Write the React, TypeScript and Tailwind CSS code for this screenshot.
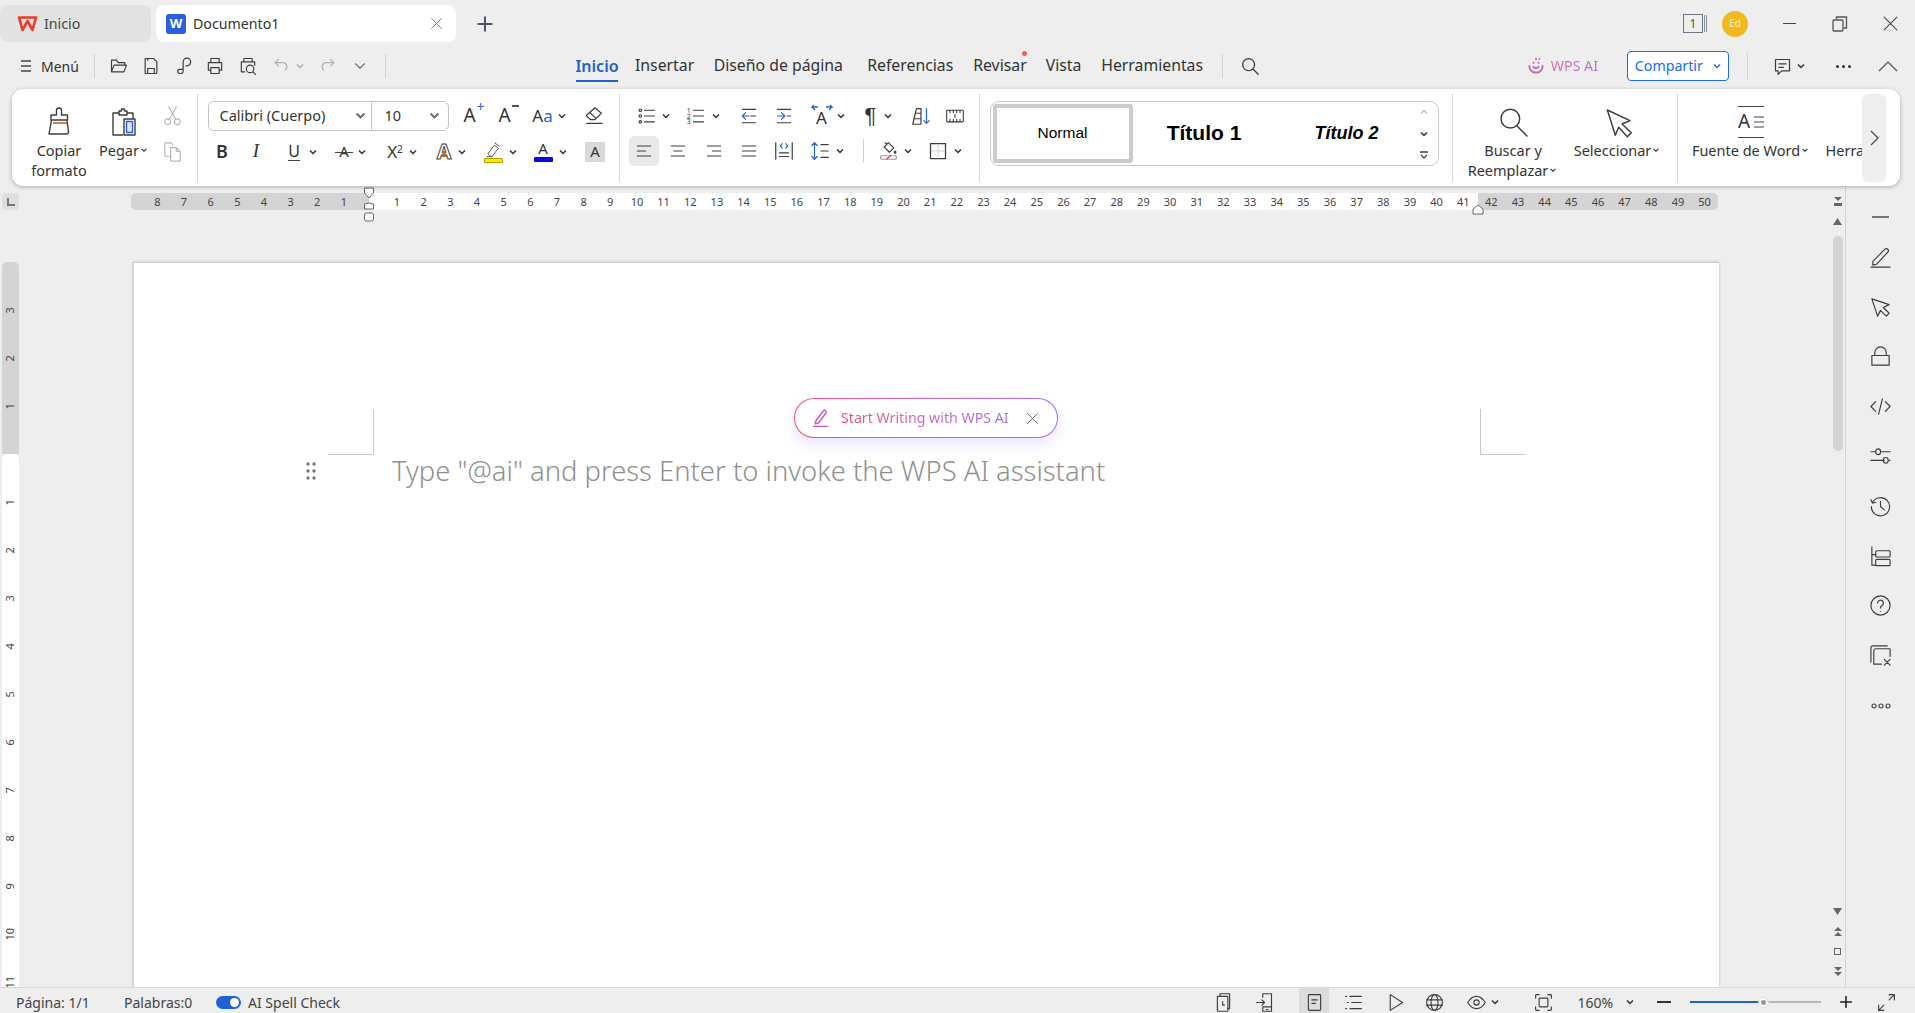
import type { ReactNode } from "react";

const ui = "font-['Noto_Sans',sans-serif]";

function S({
  size = 20,
  box = 24,
  color = "#3d3d3d",
  sw = 1.4,
  children,
}: {
  size?: number;
  box?: number;
  color?: string;
  sw?: number;
  children: ReactNode;
}) {
  return (
    <svg
      width={size}
      height={size}
      viewBox={`0 0 ${box} ${box}`}
      fill="none"
      stroke={color}
      strokeWidth={sw}
      strokeLinecap="round"
      strokeLinejoin="round"
    >
      {children}
    </svg>
  );
}

function Chev({ className = "", size = 10, color = "#333" }: { className?: string; size?: number; color?: string }) {
  return (
    <span className={`flex w-[10px] shrink-0 items-center justify-center ${className}`}>
      <svg width={size} height={size} viewBox="0 0 10 10" fill="none" stroke={color} strokeWidth="1.5">
        <path d="M2 3.5 5 6.5 8 3.5" />
      </svg>
    </span>
  );
}

function Ic({ className = "", children }: { className?: string; children: ReactNode }) {
  return <div className={`flex h-6 w-6 shrink-0 items-center justify-center ${className}`}>{children}</div>;
}

function Divider({ className = "" }: { className?: string }) {
  return <div className={`w-px shrink-0 bg-[#d2d2d2] ${className}`} />;
}

function TitleBar() {
  return (
    <div className="flex h-[47px] items-start pt-[5px]">
      <div className="flex h-[37px] w-[151px] items-center rounded-lg bg-[#e2e2e2] pl-[17px] text-[14.2px] text-[#444]">
        <svg width="21" height="18" viewBox="0 0 21 18" fill="none" stroke="#ee3a2c" strokeWidth="2.6" strokeLinejoin="round">
          <path d="M2 2.5h17L15.5 15 10.5 6 5.5 15z" />
        </svg>
        <span className="ml-[6px]">Inicio</span>
      </div>
      <div className="ml-[5px] flex h-[37px] w-[300px] items-center rounded-lg bg-white pl-[10px] text-[14.2px] text-[#333]">
        <div className="flex h-[20px] w-[20px] items-center justify-center rounded-[3px] bg-[#2a5fe0] text-[13px] font-bold text-white">W</div>
        <span className="ml-[7px]">Documento1</span>
        <div className="ml-auto mr-[11px]">
          <S size={17} color="#777" sw={1.3}>
            <path d="M5 5l14 14M19 5 5 19" />
          </S>
        </div>
      </div>
      <div className="ml-[19px] flex h-[37px] items-center">
        <S size={20} color="#4a5568" sw={2.4}>
          <path d="M12 4v16M4 12h16" />
        </S>
      </div>
      <div className="ml-auto flex h-[37px] items-center">
        <div className="flex items-center">
          <div className="flex h-[19px] w-[20px] items-center justify-center border-[1.5px] border-[#6b7685] text-[12px] leading-none text-[#555]">1</div>
          <div className="ml-[1px] h-[17px] w-[3px] border-x border-[#8a8f96]" />
        </div>
        <div className="ml-[15px] flex h-[26px] w-[26px] items-center justify-center rounded-full bg-[#f2b81f] text-[10px] text-[#fdf3d0]">Ed</div>
        <div className="ml-[35px] h-[1.5px] w-[13px] bg-[#444]" />
        <div className="ml-[36px]">
          <svg width="16" height="16" viewBox="0 0 16 16" fill="none" stroke="#555" strokeWidth="1.3">
            <rect x="1" y="4" width="10" height="11" rx="1" />
            <path d="M4.5 3V1h10v11h-3" />
          </svg>
        </div>
        <div className="ml-[34px] mr-[16px]">
          <S size={17} color="#444" sw={1.5}>
            <path d="M3 3l18 18M21 3 3 21" />
          </S>
        </div>
      </div>
    </div>
  );
}

function MenuRow() {
  return (
    <div className="flex h-[42px] items-center pb-[4px] text-[15.8px] text-[#333]">
      <div className="ml-[20px]">
        <svg width="12" height="14" viewBox="0 0 12 14" stroke="#444" strokeWidth="1.3">
          <path d="M1 2h10M1 7h10M1 12h10" />
        </svg>
      </div>
      <span className="ml-[9px] w-[40px] text-[14px]">Menú</span>
      <Divider className="ml-[13px] h-[24px]" />
      <Ic className="ml-[12px]">
        <S>
          <path d="M3 19V5h6l2 3h8v3M3 19l3-8h15l-3 8z" />
        </S>
      </Ic>
      <Ic className="ml-[8px]">
        <S>
          <path d="M5 3h10l4 4v13a1 1 0 0 1-1 1H6a1 1 0 0 1-1-1zM8 21v-6h8v6M8 3v2" />
        </S>
      </Ic>
      <Ic className="ml-[9px]">
        <S>
          <path d="M11 15V7a4.5 4.5 0 0 1 9 0c0 3-2.5 5-6 5M11 15v3a3 3 0 0 1-3 3H7a2.5 2.5 0 0 1 0-5h4" />
        </S>
      </Ic>
      <Ic className="ml-[7px]">
        <S>
          <path d="M7 8V3h10v5M7 17H4V8h16v9h-3M7 14h10v7H7z" />
        </S>
      </Ic>
      <Ic className="ml-[9px]">
        <S>
          <path d="M7 7V3h10v4M8 19H4V7h16v4" />
          <circle cx="14.5" cy="15.5" r="4.5" />
          <path d="M18 19l3 3" />
        </S>
      </Ic>
      <Ic className="ml-[9px]">
        <S color="#b0b0b0">
          <path d="M9 4 5 8l4 4M5 8h9a5 5 0 0 1 3 9" />
        </S>
      </Ic>
      <Chev className="ml-[2px]" color="#b0b0b0" />
      <Ic className="ml-[11px]">
        <S color="#b0b0b0">
          <path d="M15 4l4 4-4 4M19 8h-9a5 5 0 0 0-3 9" />
        </S>
      </Ic>
      <Ic className="ml-[8px]">
        <S size={18}>
          <path d="M6 9l6 6 6-6" />
        </S>
      </Ic>
      <Divider className="ml-[13px] h-[24px]" />
      <div className="relative ml-[190px] flex h-[38px] w-[42px] items-center justify-center">
        <span className="text-[16px] font-semibold text-[#1f62c9]">Inicio</span>
        <div className="absolute bottom-[3px] left-0 h-[2px] w-full bg-[#1f62c9]" />
      </div>
      <span className="ml-[17px] w-[58px] whitespace-nowrap">Insertar</span>
      <span className="ml-[20.7px] w-[132px] whitespace-nowrap">Diseño de página</span>
      <span className="ml-[21.5px] w-[86px] whitespace-nowrap">Referencias</span>
      <span className="relative ml-[20px] w-[53px] whitespace-nowrap">
        Revisar
        <span className="absolute right-[-1px] top-[-3px] h-[5px] w-[5px] rounded-full bg-[#ec5f5f]" />
      </span>
      <span className="ml-[19.5px] w-[36px] whitespace-nowrap">Vista</span>
      <span className="ml-[19.5px] w-[102px] whitespace-nowrap">Herramientas</span>
      <Divider className="ml-[18.7px] h-[24px]" />
      <Ic className="ml-[15px]">
        <S size={22}>
          <circle cx="10.5" cy="10.5" r="6.5" />
          <path d="M15.5 15.5 21 21" />
        </S>
      </Ic>
      <Ic className="ml-[262.6px]">
        <svg width="20" height="20" viewBox="0 0 24 24" fill="none" strokeWidth="2.4" strokeLinecap="round">
          <path d="M4 12a8 8 0 0 0 16 0" stroke="#d86aa8" />
          <path d="M9 13c1.5 2 4.5 2 6 0" stroke="#a76be8" />
          <circle cx="9" cy="8" r="1.2" fill="#e2506f" stroke="none" />
          <circle cx="15" cy="8" r="1.2" fill="#b062d8" stroke="none" />
          <circle cx="12" cy="3.5" r="1.2" fill="#e2506f" stroke="none" />
          <circle cx="16" cy="3.5" r="1" fill="#b062d8" stroke="none" />
        </svg>
      </Ic>
      <span className="ml-[2.4px] w-[47px] whitespace-nowrap bg-gradient-to-r from-[#e46aa6] to-[#a96fe6] bg-clip-text text-[14.2px] text-transparent">WPS AI</span>
      <div className="ml-[29px] flex h-[30px] w-[102px] shrink-0 items-center rounded-[4px] border border-[#1a6cf0] bg-white pl-[7px] text-[14.2px] text-[#1a6cf0]">
        <span className="w-[67px]">Compartir</span>
        <Chev className="ml-[10px]" color="#1a6cf0" />
      </div>
      <Divider className="ml-[18px] h-[26px]" />
      <Ic className="ml-[23px]">
        <S size={21}>
          <path d="M4 4h16v13H11l-4 4v-4H4zM8 9h8M8 13h5" />
        </S>
      </Ic>
      <Chev className="ml-[1.5px]" />
      <div className="ml-[29.5px] flex gap-[3px]">
        <span className="h-[3px] w-[3px] rounded-full bg-[#333]" />
        <span className="h-[3px] w-[3px] rounded-full bg-[#333]" />
        <span className="h-[3px] w-[3px] rounded-full bg-[#333]" />
      </div>
      <div className="ml-[27.5px]">
        <svg width="20" height="12" viewBox="0 0 20 12" fill="none" stroke="#555" strokeWidth="1.2">
          <path d="M1 11 10 2l9 9" />
        </svg>
      </div>
    </div>
  );
}

function AlignLines({ v }: { v: "l" | "c" | "r" | "j" }) {
  const d = {
    l: "M4 6h16M4 12h10M4 18h16",
    c: "M4 6h16M7 12h10M4 18h16",
    r: "M4 6h16M10 12h10M4 18h16",
    j: "M4 6h16M4 12h16M4 18h16",
  }[v];
  return (
    <S size={20} sw={1.3}>
      <path d={d} />
    </S>
  );
}

function BigLabel({ children }: { children: ReactNode }) {
  return <div className="mt-[2px] whitespace-nowrap text-center text-[14.5px] leading-[20px] text-[#333]">{children}</div>;
}

function ClipboardGroup() {
  return (
    <div className="flex h-full w-[186px] shrink-0 border-r border-[#d8d8d8] pt-[12px]">
      <div className="ml-[10px] flex w-[74px] flex-col items-center">
        <svg width="32" height="32" viewBox="0 0 32 32" fill="none" stroke="#3d3d3d" strokeWidth="1.4" strokeLinejoin="round">
          <path d="M13.5 9V4.5a2.5 2.5 0 0 1 5 0V9h6v5H8V9z" />
          <path d="M8.5 14 6 28h17c1.5 0 2.5-1 2.5-2l-1.5-12" />
          <path d="M10 17h14" stroke="#c9602c" strokeWidth="1.6" />
        </svg>
        <BigLabel>
          Copiar
          <br />
          formato
        </BigLabel>
      </div>
      <div className="ml-[4px] flex w-[48px] flex-col items-center">
        <svg width="32" height="32" viewBox="0 0 32 32" fill="none" stroke="#3d3d3d" strokeWidth="1.4" strokeLinejoin="round">
          <path d="M11 7H5v22h10M19 7h6v6" />
          <path d="M11 9V5h2.5V3h3v2H19v4z" />
          <rect x="16" y="13" width="11" height="16" />
          <rect x="18.5" y="15.5" width="6" height="11" stroke="#2a62d8" fill="#dbe6fb" />
        </svg>
        <BigLabel>
          <span className="flex items-center">
            Pegar
            <Chev size={8} className="w-[8px]" />
          </span>
        </BigLabel>
      </div>
      <div className="ml-[12px] flex flex-col">
        <Ic className="mt-[-2px]">
          <S size={23} color="#b8b8b8" sw={1.2}>
            <circle cx="7" cy="18.5" r="3" />
            <circle cx="17" cy="18.5" r="3" />
            <path d="M8.5 16 16 3M15.5 16 8 3" />
          </S>
        </Ic>
        <Ic className="mt-[12px]">
          <S size={23} color="#b8b8b8" sw={1.2}>
            <path d="M9 17H4V3h7l2 3M10 8h6l4 4v10H10zM16 8v4h4" />
          </S>
        </Ic>
      </div>
    </div>
  );
}

function FontGroup() {
  return (
    <div className="h-full w-[421.5px] shrink-0 border-r border-[#d8d8d8] pt-[7px] text-[#333]">
      <div className="flex h-[30px] items-center pl-[9.5px]">
        <div className="flex h-[30px] w-[241px] shrink-0 items-center rounded-[6px] border border-[#c4c4c4] text-[14.5px]">
          <span className="ml-[11px] w-[133px] whitespace-nowrap">Calibri (Cuerpo)</span>
          <Chev size={13} className="ml-[1px] w-[13px]" color="#666" />
          <div className="ml-[4px] h-full w-px bg-[#c4c4c4]" />
          <span className="ml-[13px] w-[43px]">10</span>
          <Chev size={13} className="w-[13px]" color="#666" />
        </div>
        <Ic className="ml-[9px] text-[19px]">
          <span className="relative">
            A<span className="absolute right-[-9px] top-[-3px] text-[14px] leading-[18px] text-[#2a62d8]">+</span>
          </span>
        </Ic>
        <Ic className="ml-[11px] text-[19px]">
          <span className="relative">
            A<span className="absolute right-[-8px] top-[4px] h-[1.5px] w-[7px] bg-[#555]" />
          </span>
        </Ic>
        <Ic className="ml-[14px] text-[17px]">
          <span>
            A<span className="text-[#2a62d8]">a</span>
          </span>
        </Ic>
        <Chev className="ml-[2px]" />
        <Ic className="ml-[15px]">
          <S size={22} sw={1.3}>
            <path d="M13 3 3.5 11.5 8 16h5l7-7zM7.5 8l6 6M4 20h17" />
          </S>
        </Ic>
      </div>
      <div className="mt-[6px] flex h-[30px] items-center pl-[12px]">
        <Ic className="text-[18px] font-semibold">B</Ic>
        <Ic className="ml-[10px] font-['Liberation_Serif',serif] text-[19px] italic">I</Ic>
        <Ic className="ml-[14px] text-[16px]">
          <span className="border-b-[1.5px] border-[#444] leading-[17px]">U</span>
        </Ic>
        <Chev className="ml-[2px]" />
        <Ic className="relative ml-[14px] text-[15px]">
          A<span className="absolute left-[3px] right-[3px] top-[12px] h-px bg-[#444]" />
        </Ic>
        <Chev className="ml-[1px]" />
        <Ic className="ml-[16px] text-[17px]">
          <span>
            X<sup className="text-[10px]">2</sup>
          </span>
        </Ic>
        <Chev className="ml-[1px]" />
        <Ic className="relative ml-[14px] text-[21px] font-bold text-white [-webkit-text-stroke:1px_#444]">
          A
          <svg className="absolute left-[9px] top-[10px]" width="6" height="7" viewBox="0 0 6 7" fill="#c9602c">
            <path d="M3 0l3 7H0z" />
          </svg>
        </Ic>
        <Chev className="ml-[1px]" />
        <Ic className="ml-[14px]">
          <div className="flex flex-col items-center">
            <S size={17} sw={1.2}>
              <path d="M6 20 4 18l9-12 6 4-9 12zM14 3l6 4M3 22h6" />
            </S>
            <div className="h-[5px] w-[19px] rounded-[1px] border border-[#b5a200] bg-[#f6e600]" />
          </div>
        </Ic>
        <Chev className="ml-[3px]" />
        <Ic className="ml-[13px]">
          <div className="flex flex-col items-center text-[15px] leading-[15px]">
            A<div className="mt-[1px] h-[5px] w-[19px] rounded-[1px] bg-[#0a0ad6]" />
          </div>
        </Ic>
        <Chev className="ml-[3px]" />
        <Ic className="ml-[15px]">
          <div className="flex h-[20px] w-[20px] items-center justify-center bg-[#d9d9d9] text-[15px]">A</div>
        </Ic>
      </div>
    </div>
  );
}

function ParagraphGroup() {
  return (
    <div className="h-full w-[360.5px] shrink-0 border-r border-[#d8d8d8] pt-[10px] text-[#333]">
      <div className="flex h-6 items-center pl-[15px]">
        <Ic>
          <S size={20} sw={1.3}>
            <circle cx="4" cy="5" r="1.5" />
            <circle cx="4" cy="12" r="1.5" />
            <circle cx="4" cy="19" r="1.5" />
            <path d="M9 5h12M9 12h12M9 19h12" />
          </S>
        </Ic>
        <Chev className="ml-[2px]" />
        <Ic className="ml-[13.5px]">
          <S size={20} sw={1.3}>
            <path d="M9 5h12M9 12h12M9 19h12" />
            <text x="1" y="8" fontSize="8" stroke="none" fill="#333">1</text>
            <text x="1" y="15" fontSize="8" stroke="none" fill="#333">2</text>
            <text x="1" y="22" fontSize="8" stroke="none" fill="#333">3</text>
          </S>
        </Ic>
        <Chev className="ml-[2.5px]" />
        <Ic className="ml-[16.5px]">
          <S size={20} sw={1.3}>
            <path d="M4 4h16M4 20h16M14 12h6" />
            <path d="M12 12H4M8 8l-4 4 4 4" stroke="#2a62d8" />
          </S>
        </Ic>
        <Ic className="ml-[10.5px]">
          <S size={20} sw={1.3}>
            <path d="M4 4h16M4 20h16M16 12h4" />
            <path d="M4 12h9M9 8l4 4-4 4" stroke="#2a62d8" />
          </S>
        </Ic>
        <Ic className="relative ml-[14px] text-[17px]">
          <span className="mt-[5px]">A</span>
          <svg className="absolute left-0 top-0" width="24" height="10" viewBox="0 0 24 10" fill="none" stroke="#2a62d8" strokeWidth="1.3">
            <path d="M8 3H2l2-2M2 3l3 3M16 3h6l-2-2M22 3l-3 3" />
          </svg>
        </Ic>
        <Chev className="ml-[2px]" />
        <Ic className="ml-[13px] font-['Liberation_Sans',sans-serif] text-[22px]">¶</Ic>
        <Chev />
        <Ic className="ml-[16px]">
          <S size={22} sw={1.3}>
            <path d="M3 21 7 4h5v17zM4.5 15H12M6 9h6" />
            <path d="M18 4v16M15 17l3 3 3-3" stroke="#2a62d8" />
          </S>
        </Ic>
        <Ic className="ml-[10px]">
          <S size={20} sw={1.3}>
            <rect x="2" y="5" width="20" height="14" rx="1" />
            <path d="M6 5v3M10 5v3M14 5v3M18 5v3M6 19v-3M10 19v-3M14 19v-3M18 19v-3M12 10v4" />
          </S>
        </Ic>
      </div>
      <div className="mt-[8px] flex h-[30px] items-center pl-[9.5px]">
        <div className="flex h-[30px] w-[30px] items-center justify-center rounded-[5px] bg-[#e9e9e9]">
          <AlignLines v="l" />
        </div>
        <Ic className="ml-[7px]">
          <AlignLines v="c" />
        </Ic>
        <Ic className="ml-[11.5px]">
          <AlignLines v="r" />
        </Ic>
        <Ic className="ml-[11px]">
          <AlignLines v="j" />
        </Ic>
        <Ic className="ml-[11.5px]">
          <S size={22} sw={1.3}>
            <path d="M3 3v18M21 3v18M7 14h10M7 18h10" />
            <path d="M10 4 8 6.5 10 9M14 4l2 2.5L14 9" stroke="#2a62d8" />
          </S>
        </Ic>
        <Ic className="ml-[12px]">
          <S size={22} sw={1.3}>
            <path d="M13 5h8M13 12h8M13 19h8" />
            <path d="M6 3v18M3 6l3-3 3 3M3 18l3 3 3-3" stroke="#2a62d8" />
          </S>
        </Ic>
        <Chev className="ml-[3px]" />
        <Divider className="ml-[17.5px] h-[24px]" />
        <Ic className="ml-[13px]">
          <S size={21} sw={1.3}>
            <path d="M7 8l5-5 6 6-5 5zM10 5 8 3" />
            <circle cx="19.5" cy="14" r="1" fill="#444" />
            <rect x="3" y="18" width="18" height="4" rx="1.5" stroke="#999" />
            <path d="M10 21.5 14 18.5" stroke="#e03a3a" />
          </S>
        </Ic>
        <Chev className="ml-[2.5px]" />
        <Ic className="ml-[13px]">
          <S size={20} sw={1.5}>
            <rect x="3" y="3" width="18" height="18" />
            <path d="M12 5v14M5 12h14" stroke="#bdbdbd" strokeDasharray="2 2" strokeWidth="1" />
          </S>
        </Ic>
        <Chev className="ml-[2.5px]" />
      </div>
    </div>
  );
}

function StylesGroup() {
  return (
    <div className="h-full w-[473px] shrink-0 border-r border-[#d8d8d8] pl-[9.5px] pt-[7px]">
      <div className="flex h-[65px] w-[449px] items-center rounded-[9px] border border-[#c9c9c9] pl-[2px] text-black">
        <div className="flex h-[59px] w-[140px] shrink-0 items-center justify-center rounded-[3px] border-[4px] border-[#cbcbcb] font-['Liberation_Sans',sans-serif] text-[15.5px]">
          Normal
        </div>
        <div className="flex w-[143px] shrink-0 justify-center font-['Liberation_Sans',sans-serif] text-[21px] font-bold">Título 1</div>
        <div className="flex w-[142px] shrink-0 justify-center font-['Liberation_Sans',sans-serif] text-[18px] font-bold italic">Título 2</div>
        <div className="flex h-full flex-col items-center justify-center gap-[12px] pl-[1px]">
          <Chev className="rotate-180" color="#c0c0c0" />
          <Chev />
          <svg width="10" height="9" viewBox="0 0 10 9" fill="none" stroke="#444" strokeWidth="1.3">
            <path d="M1 1h8M2 4l3 3 3-3" />
          </svg>
        </div>
      </div>
    </div>
  );
}

function FindGroup() {
  return (
    <div className="flex h-full w-[225px] shrink-0 border-r border-[#d8d8d8] pt-[12px]">
      <div className="ml-[16px] flex w-[88px] flex-col items-center">
        <S size={32} sw={1.1}>
          <circle cx="10" cy="9.5" r="7" />
          <path d="M15 15l7.5 7.5" />
        </S>
        <BigLabel>
          Buscar y
          <br />
          <span className="flex items-center">
            Reemplazar
            <Chev size={8} className="w-[8px]" />
          </span>
        </BigLabel>
      </div>
      <div className="ml-[17px] flex w-[87px] flex-col items-center">
        <S size={32} sw={1.1}>
          <path d="M4 3l17 8-6 2.5 7 6.5-3 3-6.5-7L10 22z" />
        </S>
        <BigLabel>
          <span className="flex items-center">
            Seleccionar
            <Chev size={8} className="w-[8px]" />
          </span>
        </BigLabel>
      </div>
    </div>
  );
}

function WordGroup() {
  return (
    <div className="flex h-full w-[184px] shrink-0 pt-[12px]">
      <div className="ml-[15px] flex w-[116px] shrink-0 flex-col items-center">
        <div className="flex h-[32px] w-[26px] flex-col justify-between border-y border-[#444] text-[#333]">
          <div className="flex h-full items-center justify-between">
            <span className="text-[19px] leading-none">A</span>
            <svg width="11" height="14" viewBox="0 0 11 14" stroke="#444" strokeWidth="1.1">
              <path d="M1 2h10M1 7h10M1 12h10" />
            </svg>
          </div>
        </div>
        <BigLabel>
          <span className="flex items-center">
            Fuente de Word
            <Chev size={8} className="w-[8px]" />
          </span>
        </BigLabel>
      </div>
      <div className="ml-[16.5px] mt-[34px] text-[14.5px] leading-[20px] text-[#333]">Herra</div>
    </div>
  );
}

function Ribbon() {
  return (
    <div className="relative z-10 ml-[12px] flex h-[97px] w-[1887.5px] items-center rounded-[11px] bg-white shadow-[0_1px_4px_rgba(0,0,0,0.28)]">
      <div className="flex h-[88px] w-full items-stretch">
        <ClipboardGroup />
        <FontGroup />
        <ParagraphGroup />
        <StylesGroup />
        <FindGroup />
        <WordGroup />
        <div className="flex w-[24px] items-center justify-center rounded-[6px] bg-[#eeeeee]">
          <svg width="9" height="16" viewBox="0 0 9 16" fill="none" stroke="#444" strokeWidth="1.2">
            <path d="M1 1l7 7-7 7" />
          </svg>
        </div>
      </div>
    </div>
  );
}

function HRuler() {
  const left = [8, 7, 6, 5, 4, 3, 2, 1];
  const mid = Array.from({ length: 41 }, (_, i) => i + 1);
  const right = Array.from({ length: 9 }, (_, i) => i + 42);
  return (
    <div className="relative ml-[112px] flex h-[17px] w-[1587px] text-[11px] leading-[17px] text-[#444]">
      <div className="flex w-[238px] rounded-l-[5px] bg-[#d4d4d4] pl-[13px]">
        {left.map((n) => (
          <span key={n} className="w-[26.67px] shrink-0 text-center">
            {n}
          </span>
        ))}
      </div>
      <div className="flex w-[1109px] bg-white pl-[14.7px]">
        {mid.map((n) => (
          <span key={n} className="w-[26.67px] shrink-0 text-center">
            {n}
          </span>
        ))}
      </div>
      <div className="flex w-[240px] rounded-r-[5px] bg-[#d4d4d4]">
        {right.map((n) => (
          <span key={n} className="w-[26.67px] shrink-0 text-center">
            {n}
          </span>
        ))}
      </div>
      <svg className="absolute left-[231px] top-[-6px]" width="14" height="36" viewBox="0 0 14 36" fill="#fff" stroke="#666" strokeWidth="1">
        <path d="M2.5 1h9v5L7 11 2.5 6z" />
        <path d="M2.5 22v-5L7 16l4.5 1v5z" />
        <rect x="2.5" y="26" width="9" height="8" rx="2" />
      </svg>
      <svg className="absolute left-[1340px] top-[11px]" width="14" height="11" viewBox="0 0 14 11" fill="#fff" stroke="#666" strokeWidth="1">
        <path d="M2 10V5l5-4 5 4v5z" />
      </svg>
    </div>
  );
}

function VRuler() {
  const top = [3, 2, 1];
  const bottom = [1, 2, 3, 4, 5, 6, 7, 8, 9, 10, 11];
  return (
    <div className="h-[725px] w-[17px] shrink-0 text-[11px] text-[#444]">
      <div className="h-[192px] rounded-t-[5px] bg-[#d4d4d4] pt-[24px]">
        {top.map((n) => (
          <div key={n} className="flex h-[48px] items-center justify-center">
            <span className="-rotate-90">{n}</span>
          </div>
        ))}
      </div>
      <div className="h-[533px] rounded-t-[5px] bg-white pt-[24px]">
        {bottom.map((n) => (
          <div key={n} className="flex h-[48px] items-center justify-center">
            <span className="-rotate-90">{n}</span>
          </div>
        ))}
      </div>
    </div>
  );
}

function Page() {
  return (
    <div className="relative ml-[114px] h-[725px] w-[1586px] shrink-0 border-l border-t border-[#d0d0d0] bg-white shadow-[0_0_3px_rgba(0,0,0,0.2)]">
      <div className="flex justify-between pl-[194px] pr-[193px] pt-[146px]">
        <div className="h-[46px] w-[46px] border-b border-r border-[#c9c9c9]" />
        <div className="h-[46px] w-[46px] border-b border-l border-[#c9c9c9]" />
      </div>
      <div className="flex items-center pl-[172px]">
        <svg width="10" height="18" viewBox="0 0 10 18" fill="#777">
          <circle cx="2" cy="2" r="1.7" />
          <circle cx="8" cy="2" r="1.7" />
          <circle cx="2" cy="9" r="1.7" />
          <circle cx="8" cy="9" r="1.7" />
          <circle cx="2" cy="16" r="1.7" />
          <circle cx="8" cy="16" r="1.7" />
        </svg>
        <span className="ml-[76px] whitespace-nowrap text-[27.4px] font-light leading-[32px] text-[#909090]">Type "@ai" and press Enter to invoke the WPS AI assistant</span>
      </div>
      <div className="absolute left-[660px] top-[135px] h-[40px] w-[264px] rounded-full bg-gradient-to-r from-[#f0506e] to-[#a46cf0] p-px shadow-[0_6px_14px_rgba(150,100,240,0.18)]">
        <div className="flex h-full w-full items-center rounded-full bg-white pl-[16px]">
          <svg width="20" height="20" viewBox="0 0 24 24" fill="none" stroke="#c85ab8" strokeWidth="1.6" strokeLinecap="round" strokeLinejoin="round">
            <path d="M6 15 15 3c2-1 4 1 3 3L9 18l-4 1zM3 22h17" />
          </svg>
          <span className="ml-[10px] w-[169px] whitespace-nowrap bg-gradient-to-r from-[#f0506e] to-[#a46cf0] bg-clip-text text-[14.2px] text-transparent">Start Writing with WPS AI</span>
          <div className="ml-[15px]">
            <S size={15} color="#666" sw={1.5}>
              <path d="M4 4l16 16M20 4 4 20" />
            </S>
          </div>
        </div>
      </div>
    </div>
  );
}

function ScrollCol() {
  return (
    <div className="flex h-full w-[15px] shrink-0 flex-col items-center">
      <svg className="mt-[11px]" width="10" height="10" viewBox="0 0 10 10" fill="#666">
        <path d="M1 0h8L5 4zM1 6h8v3H1z" />
      </svg>
      <svg className="mt-[11px]" width="9" height="7" viewBox="0 0 9 7" fill="#666">
        <path d="M4.5 0 9 7H0z" />
      </svg>
      <div className="mt-[11px] h-[215px] w-[10px] rounded-full bg-[#d3d3d3]" />
      <svg className="mt-[457px]" width="9" height="7" viewBox="0 0 9 7" fill="#666">
        <path d="M0 0h9L4.5 7z" />
      </svg>
      <svg className="mt-[12px]" width="10" height="10" viewBox="0 0 10 10" fill="#666">
        <path d="M5 0l4 4H1zM5 5l4 4H1z" />
      </svg>
      <div className="mt-[11px] h-[7px] w-[7px] border border-[#666]" />
      <svg className="mt-[12px]" width="10" height="10" viewBox="0 0 10 10" fill="#666">
        <path d="M1 0h8L5 4zM1 5h8L5 9z" />
      </svg>
    </div>
  );
}

function SideCell({ children }: { children: ReactNode }) {
  return <div className="flex h-[49.8px] items-center justify-center">{children}</div>;
}

function SidePanel() {
  return (
    <div className="h-full w-[70px] shrink-0 border-l border-[#d4d4d4] pt-[15px]">
      <div className="flex h-[31.5px] items-center justify-center">
        <div className="h-[1.5px] w-[17px] bg-[#777]" />
      </div>
      <SideCell>
        <S size={23} sw={1.2}>
          <path d="M4 16 17 3c2-1 4 1 3 3L8 19l-4 1zM2 22h20" />
        </S>
      </SideCell>
      <SideCell>
        <S size={23} sw={1.2}>
          <path d="M3 3l18 6-6 3 6 6-3 3-6-6-3 6z" />
        </S>
      </SideCell>
      <SideCell>
        <S size={23} sw={1.2}>
          <rect x="3" y="11" width="18" height="10" />
          <path d="M6 11V8a6 6 0 0 1 12 0v3" />
        </S>
      </SideCell>
      <SideCell>
        <S size={23} sw={1.2}>
          <path d="M7 7 2 12l5 5M17 7l5 5-5 5M14 4l-4 16" />
        </S>
      </SideCell>
      <SideCell>
        <S size={23} sw={1.2}>
          <path d="M2 7h5M13 7h9M2 16h14M21 16h1" />
          <rect x="7" y="4" width="5" height="6" rx="2.5" />
          <rect x="15" y="13" width="5" height="6" rx="2.5" />
        </S>
      </SideCell>
      <SideCell>
        <S size={23} sw={1.2}>
          <path d="M3.5 8a9.5 9.5 0 1 1-1 4M2 5l1.5 3.5L7 7.5M12 6.5V12l4 3.5" />
        </S>
      </SideCell>
      <SideCell>
        <S size={23} sw={1.2}>
          <path d="M3 2v19h4M3 10h4" />
          <rect x="7" y="6" width="15" height="6.5" rx="1" />
          <rect x="7" y="15" width="15" height="6.5" rx="1" />
        </S>
      </SideCell>
      <SideCell>
        <S size={23} sw={1.2}>
          <circle cx="12" cy="12" r="10" />
          <path d="M9 9.5a3 3 0 1 1 4.5 2.5c-1 .7-1.5 1-1.5 2.5M12 18v.1" />
        </S>
      </SideCell>
      <SideCell>
        <S size={23} sw={1.2}>
          <path d="M2 19V4a2 2 0 0 1 2-2h15M5 21V7a2 2 0 0 1 2-2h15v8M5 21h8" />
          <path d="M16 16l6 6M22 16l-6 6" stroke="#2f3b52" />
        </S>
      </SideCell>
      <SideCell>
        <svg width="20" height="6" viewBox="0 0 20 6" fill="none" stroke="#444" strokeWidth="1.2">
          <circle cx="3" cy="3" r="2" />
          <circle cx="10" cy="3" r="2" />
          <circle cx="17" cy="3" r="2" />
        </svg>
      </SideCell>
    </div>
  );
}

function StatusBar() {
  return (
    <div className="flex h-[26px] items-center border-t border-[#d8d8d8] pt-[3px] text-[14px] text-[#444]">
      <span className="ml-[16px] w-[72px] whitespace-nowrap">Página: 1/1</span>
      <span className="ml-[36px] w-[66px]">Palabras:0</span>
      <div className="ml-[26px] flex h-[13px] w-[25px] items-center justify-end rounded-full bg-[#1f62d8] pr-[2px]">
        <div className="h-[9px] w-[9px] rounded-full bg-white" />
      </div>
      <span className="ml-[7px] w-[94px] whitespace-nowrap">AI Spell Check</span>
      <Ic className="ml-[869px]">
        <S size={21} sw={1.3}>
          <rect x="5" y="5" width="12" height="17" rx="1" />
          <path d="M8 5V2h11v17h-2M11 11v4h2" />
        </S>
      </Ic>
      <Ic className="ml-[17px]">
        <S size={21} sw={1.3}>
          <path d="M10 6V2h10v20H10v-4M3 12h9M9 9l3 3-3 3M10 17h10M14 20h2" />
        </S>
      </Ic>
      <div className="ml-[23px] mt-[-3px] flex h-[26px] w-[30px] items-center justify-center self-start bg-[#dcdcdc] pt-[3px]">
        <S size={21} sw={1.3}>
          <rect x="5" y="3" width="14" height="18" rx="1" />
          <path d="M9 9h6M9 13h4" />
        </S>
      </div>
      <Ic className="ml-[12.5px]">
        <S size={21} sw={1.3}>
          <path d="M8 5h13M10 12h11M8 19h13M3 5h1M5 12h1M3 19h1" />
        </S>
      </Ic>
      <Ic className="ml-[18px]">
        <S size={21} sw={1.3}>
          <path d="M6 3l14 9-14 9z" />
        </S>
      </Ic>
      <Ic className="ml-[15px]">
        <S size={21} sw={1.3}>
          <circle cx="12" cy="12" r="9" />
          <ellipse cx="12" cy="12" rx="4" ry="9" />
          <path d="M3 9h18M3 15h18" />
        </S>
      </Ic>
      <Ic className="ml-[17.5px]">
        <S size={21} sw={1.3}>
          <path d="M2 12c3-5 6-7 10-7s7 2 10 7c-3 5-6 7-10 7s-7-2-10-7z" />
          <circle cx="12" cy="12" r="3" />
        </S>
      </Ic>
      <Chev className="ml-[2px]" />
      <Ic className="ml-[31px]">
        <S size={21} sw={1.3}>
          <path d="M3 7V4a1 1 0 0 1 1-1h3M17 3h3a1 1 0 0 1 1 1v3M21 17v3a1 1 0 0 1-1 1h-3M7 21H4a1 1 0 0 1-1-1v-3" />
          <rect x="7" y="7" width="10" height="10" rx="1" />
        </S>
      </Ic>
      <span className="ml-[22.6px] w-[36px] whitespace-nowrap text-[14px]">160%</span>
      <Chev className="ml-[11.4px]" />
      <div className="ml-[22px] h-[2.5px] w-[14px] bg-[#333]" />
      <div className="relative ml-[18.6px] flex h-[2px] w-[131.5px] bg-[#b8b8b8]">
        <div className="h-[2px] w-[73px] bg-[#1f62c9]" />
        <div className="absolute left-[68px] top-[-4.5px] flex h-[11px] w-[11px] items-center justify-center rounded-full border border-[#ddd] bg-white">
          <div className="h-[5px] w-[5px] rounded-full bg-[#999]" />
        </div>
      </div>
      <div className="ml-[16.7px]">
        <S size={16} color="#222" sw={2.4}>
          <path d="M12 4v16M4 12h16" />
        </S>
      </div>
      <Ic className="ml-[20.8px]">
        <S size={21} sw={1.3}>
          <path d="M15 3h6v6M21 3l-6 6M3 15v6h6M3 21l6-6" />
        </S>
      </Ic>
    </div>
  );
}

export default function App() {
  return (
    <div className={`flex h-[1013px] w-[1915px] flex-col overflow-hidden bg-[#eeeeee] ${ui}`}>
      <TitleBar />
      <MenuRow />
      <Ribbon />
      <div className="flex h-[801px] shrink-0">
        <div className="w-[1830px] shrink-0 overflow-hidden">
          <div className="flex h-[76px] items-start pt-[7px]">
            <div className="ml-[2px] flex h-[17px] w-[17px] items-center justify-center rounded-[4px] bg-[#dfdfdf]">
              <div className="h-[8px] w-[8px] border-b-[2px] border-l-[2px] border-[#777]" />
            </div>
            <HRuler />
          </div>
          <div className="flex items-start pl-[2px]">
            <VRuler />
            <Page />
          </div>
        </div>
        <ScrollCol />
        <SidePanel />
      </div>
      <StatusBar />
    </div>
  );
}
